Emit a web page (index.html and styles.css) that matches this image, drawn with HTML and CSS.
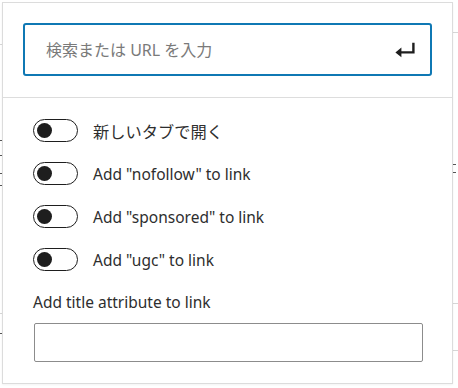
FILE: index.html
```html
<!DOCTYPE html>
<html lang="ja">
<head>
<meta charset="utf-8">
<link rel="stylesheet" href="styles.css">
</head>
<body>
<div class="backdrop">
  <span class="bl gl" style="top:44px;left:0;width:3px"></span>
  <span class="bl gl" style="top:32px;left:453px;width:5px"></span>
  <span class="bl dk" style="top:140px;left:0;width:2px"></span>
  <span class="bl dk" style="top:155px;left:0;width:2px"></span>
  <span class="bl dk" style="top:173px;left:0;width:2px"></span>
  <span class="bl dk" style="top:185px;left:0;width:2px"></span>
  <span class="bl gl" style="top:313px;left:0;width:3px"></span>
  <span class="bl dk" style="top:333px;left:0;width:2px"></span>
  <span class="bl dk" style="top:164px;left:453px;width:3px"></span>
  <span class="bl dk" style="top:172px;left:453px;width:3px"></span>
  <span class="bl gl" style="top:303px;left:453px;width:5px"></span>
  <span class="bl gl" style="top:350px;left:453px;width:5px"></span>
</div>
<div class="popover">
  <div class="url-section">
    <div class="url-input">
      <span class="placeholder">検索または URL を入力</span>
      <svg class="enter-icon" viewBox="0 0 20 20" width="24" height="24" aria-hidden="true"><path d="M16 4h2v9H7v3l-5-4 5-4v3h9V4z" fill="#1e1e1e"/></svg>
    </div>
  </div>
  <div class="settings">
    <div class="toggle-row"><span class="toggle"><span class="thumb"></span></span><span class="label ja">新しいタブで開く</span></div>
    <div class="toggle-row"><span class="toggle"><span class="thumb"></span></span><span class="label">Add "nofollow" to link</span></div>
    <div class="toggle-row"><span class="toggle"><span class="thumb"></span></span><span class="label">Add "sponsored" to link</span></div>
    <div class="toggle-row"><span class="toggle"><span class="thumb"></span></span><span class="label">Add "ugc" to link</span></div>
    <div class="title-field">
      <div class="field-label">Add title attribute to link</div>
      <div class="text-input"></div>
    </div>
  </div>
</div>
</body>
</html>
```
FILE: styles.css
```css
html, body {
  margin: 0;
  padding: 0;
  background: #ffffff;
}
body {
  width: 458px;
  height: 388px;
  overflow: hidden;
  position: relative;
  font-family: "Noto Sans", "Noto Sans CJK JP", sans-serif;
  color: #1e1e1e;
}
.backdrop .bl {
  position: absolute;
  height: 1px;
}
.backdrop .gl { background: #d6d6d6; }
.backdrop .dk { background: #555; }

.popover {
  position: relative;
  margin: 2px 0 0 2px;
  width: 451px;
  height: 382px;
  box-sizing: border-box;
  border: 1px solid #dcdcdc;
  background: #fff;
  box-shadow: 0 1px 2px rgba(0,0,0,0.05);
}
.url-section {
  padding: 20px 20px 21px 20px;
  border-bottom: 1px solid #dddddd;
}
.url-input {
  height: 53px;
  box-sizing: border-box;
  border: 2px solid #0f78b4;
  border-radius: 3px;
  display: flex;
  align-items: center;
  padding: 0 13px 0 21px;
}
.placeholder {
  flex: 1;
  font-size: 16px;
  color: #7a7a7a;
  margin-top: -1px;
}
.enter-icon {
  display: block;
  margin-top: 1px;
}
.settings {
  padding: 21px 28px 20px 30px;
}
.toggle-row {
  display: flex;
  align-items: center;
  height: 23px;
  margin-bottom: 20px;
}
.toggle {
  position: relative;
  width: 45px;
  height: 23px;
  box-sizing: border-box;
  border: 1.5px solid #1e1e1e;
  border-radius: 12px;
  margin-right: 15px;
  flex: none;
}
.thumb {
  position: absolute;
  left: 3px;
  top: 2.5px;
  width: 15px;
  height: 15px;
  border-radius: 50%;
  background: #1e1e1e;
}
.label {
  font-size: 15.5px;
  color: #2e2e2e;
}
.label.ja {
  font-size: 16.25px;
}
.field-label {
  font-size: 15.5px;
  color: #2e2e2e;
  line-height: 22px;
  margin-bottom: 10px;
}
.text-input {
  width: 389px;
  height: 39px;
  box-sizing: border-box;
  border: 1px solid #8c8c8c;
  border-radius: 2px;
  margin-left: 1px;
}
```
